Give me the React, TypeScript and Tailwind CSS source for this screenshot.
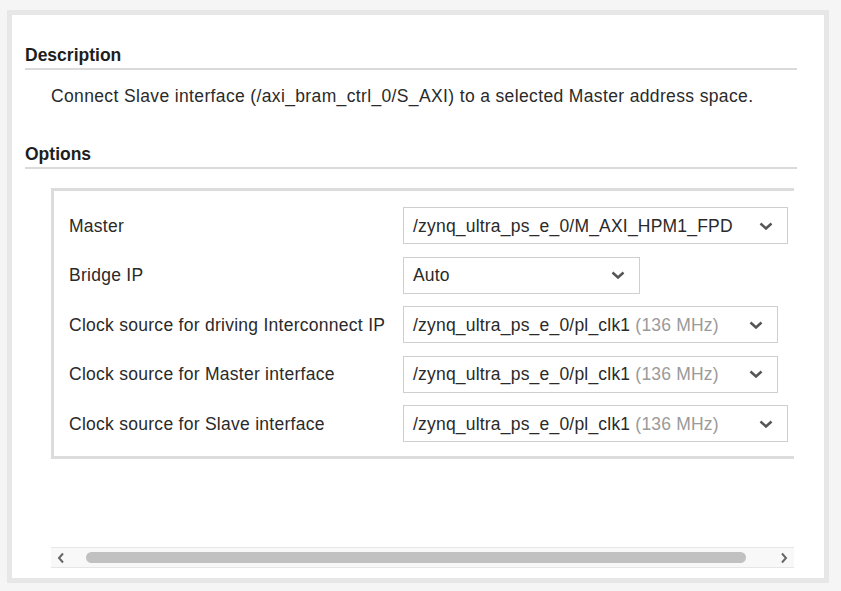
const rows = [
  { label: "Master", value: "/zynq_ultra_ps_e_0/M_AXI_HPM1_FPD", extra: "", width: "w-[385px]" },
  { label: "Bridge IP", value: "Auto", extra: "", width: "w-[237px]" },
  { label: "Clock source for driving Interconnect IP", value: "/zynq_ultra_ps_e_0/pl_clk1", extra: "(136 MHz)", width: "w-[375px]" },
  { label: "Clock source for Master interface", value: "/zynq_ultra_ps_e_0/pl_clk1", extra: "(136 MHz)", width: "w-[375px]" },
  { label: "Clock source for Slave interface", value: "/zynq_ultra_ps_e_0/pl_clk1", extra: "(136 MHz)", width: "w-[385px]" },
];

function Chevron() {
  return (
    <svg width="14" height="8" viewBox="0 0 14 8" className="shrink-0">
      <polyline points="1.5,1.5 7,6.5 12.5,1.5" fill="none" stroke="#555" strokeWidth="2.5" />
    </svg>
  );
}

function Select({ value, extra, width }: { value: string; extra: string; width: string }) {
  return (
    <div
      className={`${width} flex h-[37px] items-center justify-between border border-[#cfcfcf] bg-white pl-[9px] pr-[14px]`}
    >
      <span className="whitespace-nowrap tracking-[0.2px] text-[#2a2a2a]">
        {value}
        {extra && <span className="text-[#9a9a9a]"> {extra}</span>}
      </span>
      <Chevron />
    </div>
  );
}

export default function App() {
  return (
    <div className="h-[591px] w-[841px] bg-[#f5f5f5] pl-[7px] pt-[10px] font-['Liberation_Sans',Arial,sans-serif] text-[17.5px] leading-[20px]">
      <div className="h-[573px] w-[822px] border-[5px] border-[#e7e7e7] bg-white pl-[13px] pt-[30px]">
        <div className="w-[772px]">
          <div className="border-b-2 border-[#dadada] pb-[3px] font-bold text-[#1e1e1e]">Description</div>
          <p className="mt-[16px] pl-[26px] tracking-[0.36px] text-[#2a2a2a]">
            Connect Slave interface (/axi_bram_ctrl_0/S_AXI) to a selected Master address space.
          </p>
          <div className="mt-[38px] border-b-2 border-[#dadada] pb-[3px] font-bold text-[#1e1e1e]">Options</div>
        </div>

        <div className="ml-[26px] mt-[19px] w-[743px] overflow-hidden">
          <div className="w-[770px] border-[3px] border-[#dcdcdc] pb-[14px] pl-[15px] pt-[16px]">
            <div className="flex flex-col gap-[12.5px]">
              {rows.map((r) => (
                <div key={r.label} className="flex items-center">
                  <div className="w-[334px] shrink-0 whitespace-nowrap tracking-[0.27px] text-[#2a2a2a]">{r.label}</div>
                  <Select value={r.value} extra={r.extra} width={r.width} />
                </div>
              ))}
            </div>
          </div>
        </div>

        <div className="ml-[26px] mt-[88px] flex h-[21px] w-[743px] items-center border-y border-[#e6e6e6] bg-[#f8f8f8]">
          <div className="flex w-[20px] justify-center">
            <svg width="8" height="12" viewBox="0 0 8 12">
              <polyline points="6,1.5 2,6 6,10.5" fill="none" stroke="#666" strokeWidth="2" />
            </svg>
          </div>
          <div className="ml-[15px] h-[11px] w-[660px] rounded-full bg-[#c1c1c1]" />
          <div className="flex-1" />
          <div className="flex w-[20px] justify-center">
            <svg width="8" height="12" viewBox="0 0 8 12">
              <polyline points="2,1.5 6,6 2,10.5" fill="none" stroke="#666" strokeWidth="2" />
            </svg>
          </div>
        </div>
      </div>
    </div>
  );
}
